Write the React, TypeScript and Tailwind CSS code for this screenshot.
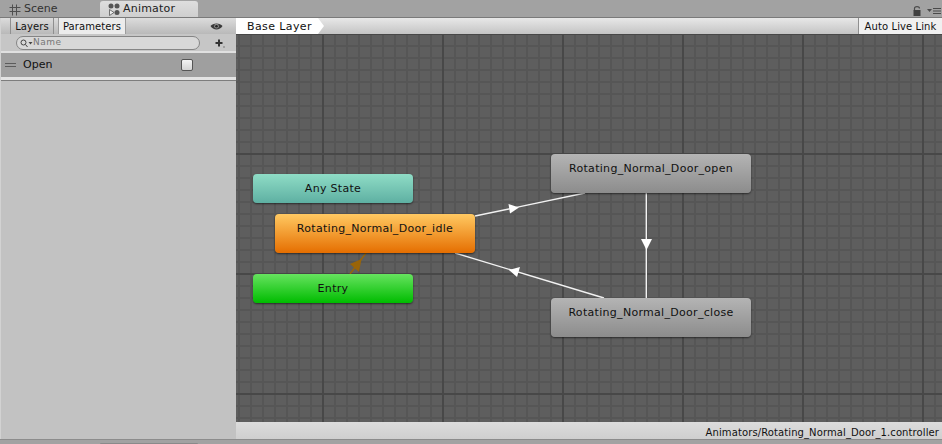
import React from "react";

const font = "font-['DejaVu_Sans',sans-serif]";

function SceneIcon() {
  return (
    <svg width="12" height="12" viewBox="0 0 12 12" className="mr-[3px]" fill="none" stroke="#4f4f4f" strokeWidth="1">
      <path d="M3.500 0.500V11.500M7.500 0.500V11.500M0.500 3.500H11.500M0.500 7.500H11.500" />
    </svg>
  );
}

function AnimatorIcon() {
  return (
    <svg width="12" height="13" viewBox="0 0 12 13" className="mr-[3px]">
      <circle cx="3" cy="3" r="2.5" fill="#555" />
      <circle cx="9" cy="3" r="2.5" fill="#555" />
      <circle cx="9" cy="9.500" r="2.500" fill="#555" />
      <path d="M1.500 6.500V12.500L6 9.500Z" fill="#eee" stroke="#555" strokeWidth="0.8" />
    </svg>
  );
}

function EyeIcon() {
  return (
    <svg width="13" height="9" viewBox="0 0 13 9">
      <path d="M0.500 4C3 0.500 10 0.500 12.500 4C10 8.500 3 8.500 0.500 4Z" fill="#3a3a3a" />
      <circle cx="6.500" cy="4.200" r="2.400" fill="#8d8d8d" />
      <circle cx="6.500" cy="4.200" r="1.300" fill="#222" />
    </svg>
  );
}

function LockIcon() {
  return (
    <svg width="8" height="10" viewBox="0 0 8 10">
      <path d="M1.500 4.500V2.500C1.500 0 6.500 0 6.500 2.500" fill="none" stroke="#4a4a4a" strokeWidth="1.2" />
      <rect x="0.500" y="4" width="7" height="6" fill="#3f3f3f" />
    </svg>
  );
}

function MenuIcon() {
  return (
    <svg width="14" height="8" viewBox="0 0 14 8" fill="#4a4a4a">
      <path d="M0 2H5L2.500 5Z" />
      <rect x="6" y="1" width="8" height="1" />
      <rect x="6" y="3.500" width="8" height="1" />
      <rect x="6" y="6" width="8" height="1" />
    </svg>
  );
}

function SearchGlyph() {
  return (
    <svg width="13" height="9" viewBox="0 0 13 9" fill="none" stroke="#444">
      <circle cx="3.500" cy="3.500" r="2.500" />
      <path d="M5.500 5.500L7.500 8" />
      <path d="M8.500 3H12.500L10.500 5.500Z" fill="#444" stroke="none" />
    </svg>
  );
}

function PlusIcon() {
  return (
    <svg width="10" height="9" viewBox="0 0 10 9" fill="#333">
      <rect x="3" y="0.500" width="2" height="7" />
      <rect x="0.500" y="3" width="7" height="2" />
      <rect x="8.500" y="7.500" width="1" height="1" />
    </svg>
  );
}

// Connections between the states, in canvas coordinates (canvas origin is 236,34).
function Transitions() {
  return (
    <svg className="absolute inset-0 h-full w-full" viewBox="0 0 706 388">
      <g stroke="#f2f2f2" strokeWidth="1.4" fill="none">
        <path d="M239 182L349 159" />
        <path d="M410.300 159V264" />
        <path d="M368 264L219 219" />
      </g>
      <g fill="#ffffff">
        <path d="M283 173.500L272.500 170L274 179.500Z" />
        <path d="M410.500 216L405 205H416Z" />
        <path d="M273 236L284 233L281 243Z" />
      </g>
      <path d="M114 240L130 219" stroke="#9a6408" strokeWidth="1.4" fill="none" />
      <path d="M125.500 225L114 230L123 238Z" fill="#9a6408" />
    </svg>
  );
}

type StateProps = { label: string; className: string };

function StateNode({ label, className }: StateProps) {
  return (
    <div
      className={`absolute flex justify-center rounded-[4px] text-[11px] leading-[13px] tracking-[0.3px] text-[#111] shadow-[0_1px_2px_rgba(0,0,0,0.55)] ${className}`}
    >
      {label}
    </div>
  );
}

export default function App() {
  return (
    <div className={`flex h-[444px] w-[942px] flex-col overflow-hidden bg-[#a2a2a2] text-[11px] text-[#111] ${font}`}>
      {/* Window tabs */}
      <div className="flex h-[17px] shrink-0 items-end bg-[#a2a2a2]">
        <div className="ml-[9px] flex h-[16px] w-[91px] items-center pt-[1px] text-[#333]">
          <SceneIcon />
          Scene
        </div>
        <div className="flex h-[16px] w-[98px] items-center rounded-t-[3px] bg-[linear-gradient(#dedede,#cfcfcf)] pl-[8px] pt-[1px] tracking-[0.2px] text-[#222]">
          <AnimatorIcon />
          Animator
        </div>
        <div className="ml-auto mb-[1px] mr-[1px] flex items-center gap-[6px]">
          <LockIcon />
          <MenuIcon />
        </div>
      </div>

      <div className="flex h-[422px] shrink-0 border-t border-[#7a7a7a]">
        {/* Parameter list */}
        <div className="flex w-[236px] shrink-0 flex-col border-l border-[#d2d2d2] bg-[#c2c2c2]">
          <div className="flex h-[16px] shrink-0 items-center bg-[linear-gradient(#dcdcdc,#b9b9b9)] pr-[13px]">
            <div className="ml-[9px] flex h-full w-[44px] items-center justify-center border-x border-[#8f8f8f] text-[10px] tracking-[0.1px]">
              Layers
            </div>
            <div className="ml-[4px] flex h-full w-[68px] items-center justify-center border-x border-[#9c9c9c] bg-[#ececec] text-[10px] tracking-[0.1px]">
              Parameters
            </div>
            <div className="ml-auto">
              <EyeIcon />
            </div>
          </div>
          <div className="flex h-[19px] shrink-0 items-start border-b-2 border-[#e0e0e0] bg-[#c6c6c6] pr-[11px] pt-[2px]">
            <div className="ml-[15px] flex h-[14px] w-[184px] items-center rounded-full border border-[#858585] bg-[#d8d8d8] pl-[3px]">
              <SearchGlyph />
              <span className="text-[9px] tracking-[0.5px] text-[#777]">Name</span>
            </div>
            <div className="ml-auto mt-[3px]">
              <PlusIcon />
            </div>
          </div>
          <div className="flex h-[27px] shrink-0 items-center border-b-[3px] border-[#e3e3e3] bg-[#9f9f9f] pr-[43px]">
            <div className="ml-[4px] flex w-[11px] flex-col gap-[2px]">
              <div className="h-px bg-[#5c5c5c]" />
              <div className="h-px bg-[#5c5c5c]" />
            </div>
            <span className="ml-[7px] text-[11px]">Open</span>
            <div className="ml-auto h-[12px] w-[12px] rounded-[2px] border border-[#555] bg-[linear-gradient(#f4f4f4,#d4d4d4)]" />
          </div>
          <div className="h-px shrink-0 bg-[#7d7d7d]" />
        </div>

        {/* Graph area */}
        <div className="flex min-w-0 flex-1 flex-col">
          <div className="flex h-[16px] shrink-0 items-stretch bg-[linear-gradient(#e8e8e8,#c4c4c4)]">
            <div className="flex w-[88px] items-center bg-white pl-[11px] pt-[2px] tracking-[0.4px] [clip-path:polygon(0_0,82px_0,88px_50%,82px_100%,0_100%)]">
              Base Layer
            </div>
            <div className="ml-auto flex w-[84px] items-center justify-center border-l border-[#8f8f8f] bg-[#f0f0f0] pt-[1px] text-[10px] tracking-[0.1px]">
              Auto Live Link
            </div>
          </div>
          <div className="relative min-h-0 flex-1 overflow-hidden bg-[#5e5e5e] bg-[linear-gradient(#484848_2px,transparent_2px),linear-gradient(90deg,#484848_2px,transparent_2px),linear-gradient(#565656_2px,transparent_2px),linear-gradient(90deg,#565656_2px,transparent_2px)] bg-[size:120px_120px,120px_120px,12px_12px,12px_12px] bg-[position:0_-1px,86px_0,0_-1px,2px_0]">
            <Transitions />
            <StateNode label="Any State" className="left-[17px] top-[140px] h-[29px] w-[160px] bg-[linear-gradient(#8fdcc6,#5eb0a2)] pt-[8px]" />
            <StateNode label="Rotating_Normal_Door_idle" className="left-[39px] top-[180px] h-[39px] w-[200px] bg-[linear-gradient(#ffc962,#e56e00)] pt-[8px]" />
            <StateNode label="Entry" className="left-[17px] top-[240px] h-[29px] w-[160px] bg-[linear-gradient(#66e35f,#00bc00)] pt-[8px]" />
            <StateNode label="Rotating_Normal_Door_open" className="left-[315px] top-[120px] h-[39px] w-[200px] bg-[linear-gradient(#b4b4b4,#8c8c8c)] pt-[8px]" />
            <StateNode label="Rotating_Normal_Door_close" className="left-[315px] top-[264px] h-[39px] w-[200px] bg-[linear-gradient(#b4b4b4,#8c8c8c)] pt-[8px]" />
          </div>
          <div className="flex h-[17px] shrink-0 items-center justify-end bg-[linear-gradient(#dcdcdc,#cfcfcf)] pr-[3px] pt-[3px] text-[10px] tracking-[0.1px]">
            Animators/Rotating_Normal_Door_1.controller
          </div>
        </div>
      </div>

      {/* Lower window strip */}
      <div className="flex-1 border-t border-[#8c8c8c] bg-[#a2a2a2]">
        <div className="ml-[100px] mt-[3px] h-[1px] w-[98px] rounded-t-[2px] bg-[#8a8a8a]" />
      </div>
    </div>
  );
}
